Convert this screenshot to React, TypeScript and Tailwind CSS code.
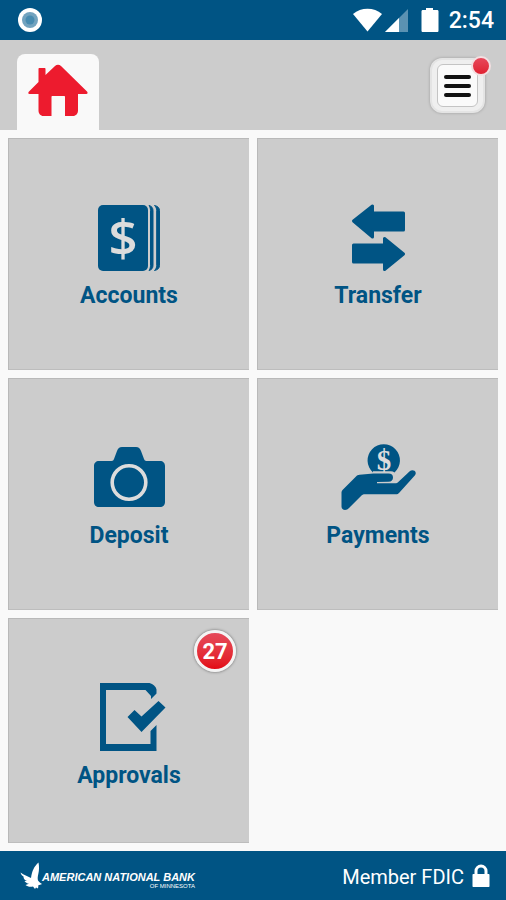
import type { ReactNode } from 'react'

// ── Tile icons ────────────────────────────────────────────────────────────────

function TileIcon({ children }: { children: ReactNode }) {
  return (
    <svg viewBox="-1 0 80 68" width="80" height="68" className="overflow-visible" fill="#005484" aria-hidden="true">
      {children}
    </svg>
  )
}

function AccountsIcon() {
  return (
    <TileIcon>
      <rect x="8" y="1" width="50" height="66" rx="5" />
      <path d="M59 1.500c2.600.6 4 2.400 4 5v55c0 2.600-1.400 4.400-4 5 1-1.500 1.500-3 1.500-5v-55c0-2-.5-3.500-1.500-5z" stroke="#005484" strokeWidth="1" />
      <path d="M64.500 1.500c3.200.6 5 2.400 5 5v55c0 2.600-1.800 4.400-5 5 1.500-1.500 2.200-3 2.200-5v-55c0-2-.7-3.500-2.200-5z" stroke="#005484" strokeWidth="1" />
      <text x="33" y="52" textAnchor="middle" fontFamily="'Open Sans', sans-serif" fontWeight="600" fontSize="51" fill="#dcdcdc">$</text>
    </TileIcon>
  )
}

function TransferIcon() {
  return (
    <TileIcon>
      <g stroke="#005484" strokeWidth="3" strokeLinejoin="round">
        <path d="M14.500 17 33.500 2v7h31v17h-31v7z" />
        <path d="M64.500 50 45.500 34.500V41h-31v17h31v7.500z" />
      </g>
    </TileIcon>
  )
}

function DepositIcon() {
  return (
    <TileIcon>
      <path d="M9 17h12.500c1.500 0 2-.7 2.500-2l3-8c1-2.700 2.300-4 5-4h14c2.700 0 4 1.300 5 4l3 8c.5 1.300 1 2 2.500 2H70c3 0 5 2 5 5v36c0 3-2 5-5 5H9c-3 0-5-2-5-5V22c0-3 2-5 5-5z" />
      <circle cx="39" cy="38.500" r="16.800" fill="none" stroke="#dcdcdc" strokeWidth="3.600" />
    </TileIcon>
  )
}

function PaymentsIcon() {
  return (
    <TileIcon>
      <path d="M34 28.500a16.200 16.200 0 1 1 21.500 0 6 6 0 0 0-4-1.200H34z" />
      <text x="45" y="25.500" textAnchor="middle" fontFamily="'Liberation Serif', serif" fontWeight="700" fontSize="29" fill="#dcdcdc">$</text>
      <path d="M3.500 46 17 32.500c1-1 2-1.500 3.500-1.700l14-1.300H49.500c3 0 4.500 1.600 4.500 4s-1.500 4.300-4.500 4.300l-11.500.2v1.200h18.500c1 0 1.700-.2 2.500-1L71 27c1.200-1 3-1.200 4.500-.2 1.500 1.200 1.700 3 .5 4.400L60 49c-.8.9-1.700 1.200-3 1.200H26c-1.500 0-2.500.3-3.500 1.300L10 64c-1 1.300-2.500 2-4 2-2 0-3.500-1.500-3.500-3.500V48.500c0-1 .3-1.800 1-2.500z" />
    </TileIcon>
  )
}

function ApprovalsIcon() {
  return (
    <TileIcon>
      <path d="M10-1h49.500c3.500 1 6.500 3.500 7 6.500v4L61 15v-3L55.500 6H16v54h44.500V47l6-6v26H10z" />
      <path d="m37.500 33 7-7 7 6.500L68.500 17l7 6.500L51.500 48z" />
    </TileIcon>
  )
}

// ── Status bar ────────────────────────────────────────────────────────────────

function StatusBar() {
  return (
    <div className="flex h-10 items-center justify-between bg-[#005484] pr-3 pl-[18px] text-white">
      <svg viewBox="0 0 24 24" width="24" height="24" aria-hidden="true">
        <circle cx="12" cy="12" r="12" fill="#fff" />
        <circle cx="12" cy="12" r="8" fill="#72a3bf" />
        <circle cx="12" cy="12" r="4.500" fill="#478bb0" />
      </svg>
      <div className="flex items-center">
        <svg viewBox="0 0 86 24" width="86" height="24" fill="#fff" aria-hidden="true">
          <path d="M0 6C8-1 21-1 29 6L14.500 23.500z" />
          <path d="M55 1v23H32z" fill="#5b92b2" />
          <path d="M46 10v14H32z" />
          <path d="M73 0h7v2h4c1 0 1.500.5 1.500 1.500v19c0 1-.5 1.500-1.500 1.500H70c-1 0-1.500-.5-1.500-1.500v-19c0-1 .5-1.500 1.500-1.500h3z" />
        </svg>
        <span className="ml-2.5 pt-0.5 text-[23px] leading-6 font-medium">2:54</span>
      </div>
    </div>
  )
}

// ── Header ────────────────────────────────────────────────────────────────────

function Header() {
  return (
    <header className="flex h-[90px] items-end justify-between bg-[#cccccc] pr-[21px] pl-[17px]">
      <button aria-label="Home" className="flex h-[76px] w-[82px] justify-center rounded-t-lg bg-[#f9f9f9] pt-2.5">
        <svg viewBox="0 0 60 52" width="60" height="52" fill="#ed1b2e" aria-hidden="true">
          <path d="M1 27.500 10.500 18V5c0-.8.300-1 1-1h5c.7 0 1 .3 1 1v6L27 2c1.800-1.700 4.200-1.700 6 0l26 25.500c1 1 .7 2.500-.7 2.500H50v16.500c0 3-2 5.500-5 5.500h-8V33c0-.7-.3-1-1-1H24.500c-.7 0-1 .3-1 1v19h-8c-3 0-5-2.500-5-5.500V30H1.500C0 30 0 28.500 1 27.500z" />
        </svg>
      </button>
      <button
        aria-label="Menu"
        className="relative mb-[17px] flex h-[55px] w-[55px] items-center justify-center rounded-xl border-2 border-[#e4e4e4] bg-[#efefef] shadow-[0_0_3px_rgba(0,0,0,0.25)]"
      >
        <span className="flex h-[43px] w-[41px] flex-col items-center justify-center gap-[5px] rounded-md border border-[#c4c4c4] bg-[#fafafa]">
          <span className="h-1 w-[27px] rounded-full bg-[#111111]" />
          <span className="h-1 w-[27px] rounded-full bg-[#111111]" />
          <span className="h-1 w-[27px] rounded-full bg-[#111111]" />
        </span>
        <span className="absolute -top-1 -right-2 h-5 w-5 rounded-full border-2 border-[#f3dfe1] bg-linear-to-b from-[#e8475a] to-[#e01f30]" />
      </button>
    </header>
  )
}

// ── Tiles ─────────────────────────────────────────────────────────────────────

const tiles = [
  { label: 'Accounts', icon: <AccountsIcon /> },
  { label: 'Transfer', icon: <TransferIcon /> },
  { label: 'Deposit', icon: <DepositIcon /> },
  { label: 'Payments', icon: <PaymentsIcon /> },
  { label: 'Approvals', icon: <ApprovalsIcon />, count: 27 },
]

function Tile({ label, icon, count }: { label: string; icon: ReactNode; count?: number }) {
  return (
    <button className="relative flex flex-col items-center gap-3 border-t border-l border-[#b9b9b9] bg-[#cccccc] pt-[65px] shadow-[inset_0_-1px_0_#bdbdbd]">
      {icon}
      <span className="text-[23px] leading-6 font-bold text-[#005484]">{label}</span>
      {count !== undefined && (
        <span className="absolute top-[11px] right-[13px] flex h-[42px] w-[42px] items-center justify-center rounded-full border-3 border-[#f4f4f4] bg-linear-to-b from-[#e5495a] to-[#e30613] text-[22px] font-bold text-white shadow-[0_0_3px_rgba(0,0,0,0.5)]">
          {count}
        </span>
      )}
    </button>
  )
}

// ── Footer ────────────────────────────────────────────────────────────────────

function Footer() {
  return (
    <footer className="flex h-[49px] items-center justify-between bg-[#005484] pr-4 pl-5 text-white">
      <div className="flex items-center">
        <svg viewBox="0 0 22 28" width="22" height="28" fill="#fff" aria-hidden="true">
          <path d="M18.500.5c.8 4 .7 8-.2 11.500-.6 2.500-.8 4.500-.3 6.500 1 1.500 2.500 2.500 4 3.500-1.500.7-2.500 1-3.500 1l-.5 3.500-2-1-1 1.500-2-2.500c-3 .6-5.500.2-7.500-1.500l3.500-1.200c-2-.4-3.500-1.300-4.500-2.800h2.500C4.500 18 3.500 16.500 3.500 14.500c-1.500-.8-2.500-2-3-4 3.500 2.500 7 3.500 10.500 5.500C12 9 14 4.500 18.500.5z" />
        </svg>
        <div className="flex flex-col items-end pt-2.5 italic">
          <span className="font-['Liberation_Sans',sans-serif] text-[11px] leading-[11px] font-bold whitespace-nowrap">
            AMERICAN NATIONAL BANK
          </span>
          <span className="font-['Liberation_Sans',sans-serif] text-[6px] leading-[6px] not-italic">OF MINNESOTA</span>
        </div>
      </div>
      <div className="flex items-center gap-2">
        <span className="pt-0.5 text-[20px] leading-6">Member FDIC</span>
        <svg viewBox="0 0 18 24" width="18" height="24" fill="#fff" aria-hidden="true">
          <path d="M2.500 10V7a6.500 6.500 0 0 1 13 0v3h1c.7 0 1 .3 1 1v11c0 .7-.3 1-1 1h-15c-.7 0-1-.3-1-1V11c0-.7.3-1 1-1zm3 0h7V7a3.500 3.500 0 0 0-7 0z" />
        </svg>
      </div>
    </footer>
  )
}

// ── Main screen ───────────────────────────────────────────────────────────────

export default function App() {
  return (
    <div className="flex min-h-screen flex-col bg-[#f9f9f9] font-['Roboto',sans-serif]">
      <StatusBar />
      <Header />
      <main className="grid flex-1 grid-cols-2 grid-rows-[232px_232px_1fr] gap-2 p-2">
        {tiles.map((tile) => (
          <Tile key={tile.label} {...tile} />
        ))}
      </main>
      <Footer />
    </div>
  )
}
